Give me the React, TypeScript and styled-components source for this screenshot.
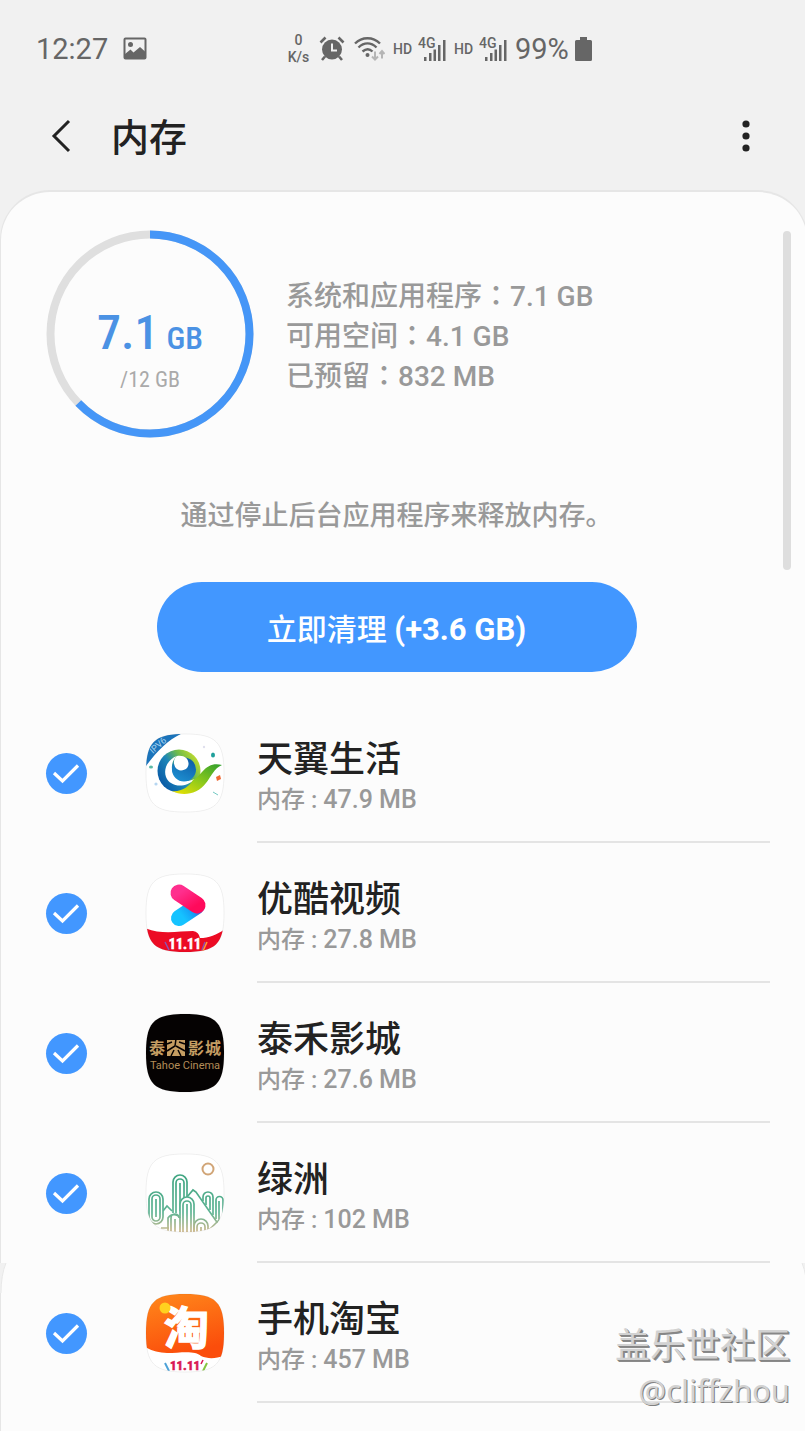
import React, { useState } from "react";
import styled, { createGlobalStyle } from "styled-components";

const GlobalStyle = createGlobalStyle`
  * { box-sizing: border-box; }
  body {
    margin: 0;
    background: #f1f1f1;
    font-family: Roboto, "Noto Sans CJK SC", sans-serif;
    color: #222;
  }
`;

const Screen = styled.div`
  position: relative;
  min-height: 100vh;
  overflow: hidden;
  display: flex;
  flex-direction: column;
`;

/* ---------- status bar ---------- */

const StatusBar = styled.div`
  display: flex;
  align-items: center;
  height: 98px;
  padding: 0 36px;
  color: #666;
  font-weight: 500;
`;

const StatusLeft = styled.div`
  display: flex;
  align-items: center;
  gap: 15px;
  width: 250px;
`;

const StatusRight = styled.div`
  display: flex;
  align-items: center;
  gap: 8px;
`;

const Clock = styled.span`
  font-size: 29px;
  font-weight: 400;
`;

const NetSpeed = styled.span`
  display: flex;
  flex-direction: column;
  align-items: center;
  width: 25px;
  font-size: 14px;
  line-height: 17px;
`;

const HdLabel = styled.span`
  width: 17px;
  font-size: 14px;
`;

const Battery = styled.span`
  display: flex;
  align-items: center;
  gap: 6px;
  font-size: 29px;
  font-weight: 400;
`;

/* ---------- header ---------- */

const Header = styled.header`
  display: flex;
  align-items: center;
  height: 76px;
  margin-bottom: 16px;
  padding: 0 34px 0 37px;
`;

const IconButton = styled.button`
  display: grid;
  place-items: center;
  width: 50px;
  height: 50px;
  padding: 0;
  border: 0;
  background: none;
`;

const Title = styled.h1`
  flex: 1;
  margin: 4px 0 0 24px;
  font-size: 38px;
  font-weight: 500;
  line-height: 50px;
`;

/* ---------- card ---------- */

const Card = styled.main`
  position: relative;
  flex: 1;
  margin-right: -3px;
  padding: 38px 37px 27px 0;
  border: 2px solid #e6e6e6;
  border-width: 2px 1px 0 1px;
  border-radius: 50px 50px 0 0;
  background: #fcfcfc;
`;

const ScrollThumb = styled.div`
  position: absolute;
  top: 39px;
  right: 16px;
  width: 8px;
  height: 339px;
  border-radius: 4px;
  background: #dedede;
`;

const Summary = styled.section`
  display: flex;
  align-items: center;
  gap: 32px;
  padding-left: 45px;
`;

const Gauge = styled.div`
  display: grid;
  width: 208px;
  height: 208px;
  > * { grid-area: 1 / 1; }
`;

const GaugeText = styled.div`
  display: flex;
  flex-direction: column;
  align-items: center;
  padding-top: 75px;
  font-family: "Roboto Condensed", Roboto, sans-serif;
`;

const Used = styled.div`
  display: flex;
  align-items: baseline;
  gap: 8px;
  color: #4b92e4;
  font-size: 48px;
  font-weight: 500;
  line-height: 56px;
`;

const Unit = styled.span`
  font-size: 32px;
`;

const Total = styled.div`
  color: #aaa;
  font-size: 22px;
  line-height: 28px;
`;

const Facts = styled.ul`
  margin: 0;
  padding: 0;
  list-style: none;
  color: #999;
  font-size: 28px;
  font-weight: 500;
  line-height: 40px;
`;

const Fact = styled.li`
  display: flex;
  align-items: baseline;
  height: 40px;
`;

const Colon = styled.span`
  font-family: "Noto Sans CJK TC", sans-serif;
`;

const Actions = styled.section`
  display: flex;
  flex-direction: column;
  align-items: center;
  gap: 48px;
  margin: 60px -22px 31px 0;
`;

const Hint = styled.p`
  margin: 0;
  color: #999;
  font-size: 27px;
  font-weight: 500;
  line-height: 36px;
`;

const CleanButton = styled.button`
  width: 480px;
  max-width: 90%;
  height: 90px;
  border: 0;
  border-radius: 45px;
  background: #4297ff;
  color: #fff;
  font-family: inherit;
  font-size: 30px;
  font-weight: 500;
`;

const Amount = styled.span`
  font-size: 31px;
  font-weight: 700;
`;

/* ---------- app list ---------- */

const AppList = styled.ul`
  margin: 0;
  padding: 0;
  list-style: none;
`;

const Row = styled.li`
  position: relative;
`;

const RowLabel = styled.label`
  display: flex;
  align-items: center;
  height: 140px;
  padding-left: 45px;
`;

const CheckBox = styled.span`
  display: grid;
  width: 41px;
  height: 41px;
  margin-right: 58px;
  > * { grid-area: 1 / 1; }
  svg { pointer-events: none; }
`;

const CheckInput = styled.input`
  appearance: none;
  width: 41px;
  height: 41px;
  margin: 0;
  border: 2px solid #b5b5b5;
  border-radius: 50%;
  &:checked { border: 0; background: #4297ff; }
`;

const AppText = styled.span`
  flex: 1;
  display: flex;
  flex-direction: column;
  align-self: stretch;
  margin-left: 32px;
  padding-top: 35px;
  border-bottom: 2px solid #e4e4e4;
`;

const AppName = styled.span`
  font-size: 36px;
  font-weight: 500;
  line-height: 44px;
`;

const AppMemory = styled.span`
  color: #999;
  font-size: 24px;
  font-weight: 500;
  line-height: 36px;
`;

const Size = styled.span`
  font-size: 25px;
`;

const CornerMark = styled.svg<{ $side: "left" | "right" }>`
  position: absolute;
  top: 0;
  ${(p) => (p.$side === "left" ? "left: -1px;" : "right: -38px; transform: scaleX(-1);")}
`;

const Watermark = styled.div`
  position: absolute;
  right: 15px;
  bottom: 20px;
  color: #d2d2d2;
  text-align: right;
  text-shadow: 1px 1px 0 #858585, 2px 2px 0 #8a8a8a;
  font-family: "Noto Sans", "Noto Sans CJK SC", sans-serif;
  font-size: 35px;
  line-height: 48px;
  pointer-events: none;
`;

const Author = styled.div`
  font-size: 31px;
  line-height: 42px;
  text-shadow: 1px 1px 0 #808080;
`;

/* ---------- drawings ---------- */

const PictureIcon = () => (
  <svg width="24" height="24" viewBox="0 0 24 24">
    <rect x="1.5" y="1.5" width="21" height="20" rx="1" fill="none" stroke="#666" strokeWidth="2" />
    <circle cx="7.5" cy="7.5" r="2.5" fill="#666" />
    <path d="M2 17 7.500 12.500 10.500 15.500 17 10 22 14.500V21.500H2Z" fill="#666" />
  </svg>
);

const AlarmIcon = () => (
  <svg width="26" height="26" viewBox="0 0 26 26" fill="none" stroke="#666">
    <circle cx="13" cy="13.500" r="10" fill="#666" stroke="none" />
    <path d="M1.500 6.500 6.500 1.500M24.500 6.500 19.500 1.500M6 20.500 3 24M20 20.500 23 24" strokeWidth="2.600" />
    <path d="M13 7.500V14.500H18" stroke="#f1f1f1" strokeWidth="2" />
  </svg>
);

const WifiIcon = () => (
  <svg width="32" height="26" viewBox="0 0 32 26" fill="none" strokeWidth="2.400">
    <path d="M2 7.500C9 .5 20 .5 27 7.500M5.500 11.500C11 6 18 6 23.500 11.500M9.500 15.500C13 12.500 16.500 12.500 19.500 15.500" stroke="#666" />
    <circle cx="14.500" cy="19" r="2" fill="#666" />
    <path d="M22 15.500V23M19 20.500 22 23.500 25 20.500M29 22.500V15.500M26.500 18 29 15 31.500 18" stroke="#b5b5b5" strokeWidth="2" />
  </svg>
);

const SignalIcon = () => (
  <svg width="28" height="26" viewBox="0 0 28 26" fill="#666">
    <text x="0" y="12" fontFamily="Roboto, sans-serif" fontSize="14" fontWeight="500">4G</text>
    <path d="M6 21h2.500v4H6zM11 17h2.500v8H11zM15.500 13.500h2.500v11.500h-2.500zM20 9h2.500v16H20zM25 4h2.500v21H25z" />
  </svg>
);

const BatteryIcon = () => (
  <svg width="17" height="25" viewBox="0 0 17 25">
    <path d="M5 0h7v3h3.500q1.500 0 1.500 1.500v18q0 1.500-1.500 1.500h-14q-1.500 0-1.500-1.500v-18q0-1.500 1.500-1.500H5z" fill="#666" />
  </svg>
);

const SQUIRCLE = "M40 1C71 1 79 9 79 40C79 71 71 79 40 79C9 79 1 71 1 40C1 9 9 1 40 1Z";

function IconFrame({ id, fill, children }: { id: string; fill: string; children: React.ReactNode }) {
  return (
    <svg width="80" height="80" viewBox="0 0 80 80">
      <defs>
        <clipPath id={`${id}-clip`}>
          <path d={SQUIRCLE} />
        </clipPath>
      </defs>
      <path d={SQUIRCLE} fill={fill} />
      <g clipPath={`url(#${id}-clip)`}>{children}</g>
      <path d={SQUIRCLE} fill="none" stroke="#000" strokeOpacity="0.06" />
    </svg>
  );
}

const TianyiIcon = () => (
  <IconFrame id="tianyi" fill="#fff">
    <defs>
      <linearGradient id="ty-ring" x1="0.1" y1="0.75" x2="0.9" y2="0.2">
        <stop offset="0" stopColor="#0b5ea8" />
        <stop offset="0.4" stopColor="#1c86b8" />
        <stop offset="0.7" stopColor="#6dbb4c" />
        <stop offset="1" stopColor="#b9d82f" />
      </linearGradient>
      <linearGradient id="ty-tail" x1="0" y1="1" x2="1" y2="0">
        <stop offset="0" stopColor="#f2e400" />
        <stop offset="0.5" stopColor="#8cc91c" />
        <stop offset="1" stopColor="#2f9e2e" />
      </linearGradient>
      <linearGradient id="ty-core" x1="0.8" y1="0" x2="0.3" y2="1">
        <stop offset="0" stopColor="#0d5aa6" />
        <stop offset="1" stopColor="#1d8fd0" />
      </linearGradient>
    </defs>
    <path d="M0 0H38C24 6 12 18 1 33Z" fill="#1b74bb" />
    <text transform="translate(8 21) rotate(-42)" fill="#a9d4f0" fontFamily="Roboto, sans-serif" fontSize="9">IPV6</text>
    <circle cx="34" cy="38" r="21.500" fill="url(#ty-ring)" />
    <path d="M32 23C23 26 18 36 21 44C25 54 40 56 50 46C42 49 33 49 29 42C25 35 27 27 32 23Z" fill="#fff" />
    <circle cx="39" cy="36.500" r="12" fill="url(#ty-core)" />
    <path d="M32 23C27 26 28 37 36 37.500C41 37.500 44 34 43.500 30C43 25 39 22 32 23Z" fill="#fff" />
    <path d="M48 47C52 45 54 42 57 39C63 32 69 30 77 32C69 35 66 44 61 50C53 61 38 64 27 58C36 59 44 54 48 47Z" fill="url(#ty-tail)" />
    <ellipse cx="68" cy="22" rx="2" ry="2.600" fill="#20a09b" />
    <ellipse cx="6" cy="34" rx="2" ry="1.500" fill="#5bb9a5" />
    <circle cx="11" cy="51" r="1.600" fill="#b6d6f1" />
    <path d="M71 44 75 42 76 46 72 48Z" fill="#f06a35" />
    <path d="M68 59 73 62" stroke="#72c8c2" />
    <circle cx="59" cy="14" r="1.200" fill="#e0e0ee" />
  </IconFrame>
);

const YoukuIcon = () => (
  <IconFrame id="youku" fill="#fff">
    <defs>
      <linearGradient id="yk-pink" x1="0" y1="0" x2="1" y2="1">
        <stop offset="0" stopColor="#ff2f8e" />
        <stop offset="1" stopColor="#ff0a5b" />
      </linearGradient>
      <linearGradient id="yk-blue" x1="0" y1="0.5" x2="1" y2="0">
        <stop offset="0" stopColor="#15c3ff" />
        <stop offset="0.6" stopColor="#169cf5" />
        <stop offset="1" stopColor="#5848c0" />
      </linearGradient>
    </defs>
    <path d="M34 45 52 33" stroke="url(#yk-blue)" strokeWidth="16" strokeLinecap="round" />
    <path d="M34 20 52 32" stroke="url(#yk-pink)" strokeWidth="17" strokeLinecap="round" />
    <path d="M0 55C16 62 34 58 48 58Q54 59 55 65C64 65 73 61 80 56V80H0Z" fill="#ec0b24" />
    <path d="M20 69 24 77M60 69 57 77" stroke="#8b52b5" strokeWidth="1.500" />
    <path d="M62 69 58 78" stroke="#ffa12c" strokeWidth="1.500" />
    <text x="40" y="76" fill="#fff" stroke="#fff" strokeWidth="0.600" textAnchor="middle" fontFamily='"Roboto Condensed", Roboto, sans-serif' fontWeight="700" fontSize="14">11.11</text>
  </IconFrame>
);

const TahoeIcon = () => (
  <IconFrame id="tahoe" fill="#050202">
    <g fill="#c49d62" fontFamily='"Noto Sans CJK SC", sans-serif' fontWeight="700" fontSize="16">
      <text x="4" y="41">泰</text>
      <text x="43" y="41">影</text>
      <text x="60" y="41">城</text>
      <path d="M22 27h18v16H22z" />
    </g>
    <path d="M31 26 30 33 22 38M31 33 40 38M34 29 40 31M29 37 26 43M33 37 36 43M22 31 27 29" fill="none" stroke="#050202" strokeWidth="1.500" />
    <text x="40" y="56" textAnchor="middle" fill="#b38d58" fontFamily="Roboto, sans-serif" fontSize="11">Tahoe Cinema</text>
  </IconFrame>
);

const OasisIcon = () => (
  <IconFrame id="oasis" fill="#fff">
    <defs>
      <linearGradient id="oa-line" gradientUnits="userSpaceOnUse" x1="0" y1="22" x2="0" y2="80">
        <stop offset="0" stopColor="#3fa581" />
        <stop offset="0.65" stopColor="#5fb494" />
        <stop offset="1" stopColor="#d6ba8c" />
      </linearGradient>
    </defs>
    <circle cx="63" cy="16" r="5.500" fill="none" stroke="#d1a577" strokeWidth="2" />
    <g fill="none" stroke="url(#oa-line)" strokeWidth="1.700">
      <path d="M18 58 22 53 27 58M42 44 48 37 51 39 76 75M16 75H24" />
      <rect x="4" y="39" width="14" height="32" rx="7" fill="#fff" />
      <rect x="7" y="42" width="8" height="26" rx="4" />
      <path d="M11 46V64" />
      <path d="M28 60V29a7 7 0 0 1 14 0V48M31 60V30a4 4 0 0 1 8 0V46M35 30V58" />
      <path d="M35 80V51a7 7 0 0 1 14 0V80M38 80V52a4 4 0 0 1 8 0V80M42 51V80" fill="#fff" />
      <path d="M23 80V65a7 7 0 0 1 12 0M26 80V65a4 4 0 0 1 8 0M30 66V80" />
      <path d="M58 48V44a5 5 0 0 1 10 0V62M61 52V45a2 2 0 0 1 4 0V57" />
      <path d="M71 66V47a3 3 0 0 1 7 0V66M74 48V68" />
      <path d="M49 80V73a7 7 0 0 1 14 0V80M52 80V74a4 4 0 0 1 8 0V80M56 74V80M64 77 73 68H79" />
    </g>
  </IconFrame>
);

const TaobaoIcon = () => (
  <IconFrame id="taobao" fill="#fff">
    <defs>
      <linearGradient id="tb-orange" x1="0" y1="0" x2="0.3" y2="1">
        <stop offset="0" stopColor="#ff8a1c" />
        <stop offset="1" stopColor="#fb4d0b" />
      </linearGradient>
    </defs>
    <path d="M0 0H80V62C71 66 63 66 56 63C50 57 35 60 22 60Q10 60 0 54Z" fill="url(#tb-orange)" />
    <text x="19" y="52" fill="#fff" stroke="#fff" strokeWidth="1.500" fontFamily='"Noto Sans CJK SC", sans-serif' fontWeight="700" fontSize="45">淘</text>
    <circle cx="20" cy="15" r="5.500" fill="#ffd11f" />
    <text x="40" y="77" fill="#d91754" stroke="#d91754" strokeWidth="0.600" textAnchor="middle" fontFamily='"Roboto Condensed", Roboto, sans-serif' fontWeight="700" fontSize="13">11.11</text>
    <path d="M20 70 24 78" stroke="#4da2d8" strokeWidth="2" />
    <path d="M62 70 58 78" stroke="#85c540" strokeWidth="2" />
    <path d="M58 67 56 71" stroke="#d91754" strokeWidth="1.500" />
  </IconFrame>
);

/* ---------- data ---------- */

const apps = [
  { name: "天翼生活", memory: "47.9 MB", Icon: TianyiIcon },
  { name: "优酷视频", memory: "27.8 MB", Icon: YoukuIcon },
  { name: "泰禾影城", memory: "27.6 MB", Icon: TahoeIcon },
  { name: "绿洲", memory: "102 MB", Icon: OasisIcon },
  { name: "手机淘宝", memory: "457 MB", Icon: TaobaoIcon },
];

const facts = [
  ["系统和应用程序", "7.1 GB"],
  ["可用空间", "4.1 GB"],
  ["已预留", "832 MB"],
];

function AppRow({ app, last }: { app: (typeof apps)[number]; last: boolean }) {
  const [checked, setChecked] = useState(true);
  const { Icon } = app;
  return (
    <Row>
      {last &&
        (["left", "right"] as const).map((side) => (
          <CornerMark key={side} $side={side} width="7" height="30" viewBox="0 0 7 30">
            <path d="M0 0H6Q1 12 1 30H0Z" fill="#f1f1f1" />
            <path d="M6 0Q1 12 1 30" fill="none" stroke="#e8e8e8" />
          </CornerMark>
        ))}
      <RowLabel>
        <CheckBox>
          <CheckInput type="checkbox" checked={checked} onChange={(e) => setChecked(e.target.checked)} />
          {checked && (
            <svg width="41" height="41" viewBox="0 0 41 41">
              <path d="M8 20 16.500 28 32 12.500" fill="none" stroke="#fff" strokeWidth="3.200" />
            </svg>
          )}
        </CheckBox>
        <Icon />
        <AppText>
          <AppName>{app.name}</AppName>
          <AppMemory>
            内存 : <Size>{app.memory}</Size>
          </AppMemory>
        </AppText>
      </RowLabel>
    </Row>
  );
}

export default function App() {
  return (
    <Screen>
      <GlobalStyle />
      <StatusBar>
        <StatusLeft>
          <Clock>12:27</Clock>
          <PictureIcon />
        </StatusLeft>
        <StatusRight>
          <NetSpeed>
            <span>0</span>
            <span>K/s</span>
          </NetSpeed>
          <AlarmIcon />
          <WifiIcon />
          <HdLabel>HD</HdLabel>
          <SignalIcon />
          <HdLabel>HD</HdLabel>
          <SignalIcon />
          <Battery>
            99%
            <BatteryIcon />
          </Battery>
        </StatusRight>
      </StatusBar>
      <Header>
        <IconButton aria-label="返回">
          <svg width="24" height="34" viewBox="0 0 24 34">
            <path d="M19 2 4 17 19 32" fill="none" stroke="#222" strokeWidth="3" />
          </svg>
        </IconButton>
        <Title>内存</Title>
        <IconButton aria-label="更多选项">
          <svg width="8" height="34" viewBox="0 0 8 34" fill="#222">
            <circle cx="4" cy="5" r="3.600" />
            <circle cx="4" cy="17" r="3.600" />
            <circle cx="4" cy="29" r="3.600" />
          </svg>
        </IconButton>
      </Header>
      <Card>
        <ScrollThumb />
        <Summary>
          <Gauge>
            <svg width="208" height="208" viewBox="0 0 208 208" fill="none" strokeWidth="8">
              <circle cx="104" cy="104" r="99.500" stroke="#dfdfdf" />
              <circle
                cx="104"
                cy="104"
                r="99.500"
                stroke="#4596f7"
                pathLength="1000"
                strokeDasharray="628 1000"
                transform="rotate(-90 104 104)"
              />
            </svg>
            <GaugeText>
              <Used>
                7.1<Unit>GB</Unit>
              </Used>
              <Total>/12 GB</Total>
            </GaugeText>
          </Gauge>
          <Facts>
            {facts.map(([name, value]) => (
              <Fact key={name}>
                {name}
                <Colon>：</Colon>
                <span>{value}</span>
              </Fact>
            ))}
          </Facts>
        </Summary>
        <Actions>
          <Hint>通过停止后台应用程序来释放内存。</Hint>
          <CleanButton>
            立即清理 <Amount>(+3.6 GB)</Amount>
          </CleanButton>
        </Actions>
        <AppList>
          {apps.map((app, i) => (
            <AppRow key={app.name} app={app} last={i === apps.length - 1} />
          ))}
        </AppList>
      </Card>
      <Watermark>
        盖乐世社区
        <Author>@cliffzhou</Author>
      </Watermark>
    </Screen>
  );
}
